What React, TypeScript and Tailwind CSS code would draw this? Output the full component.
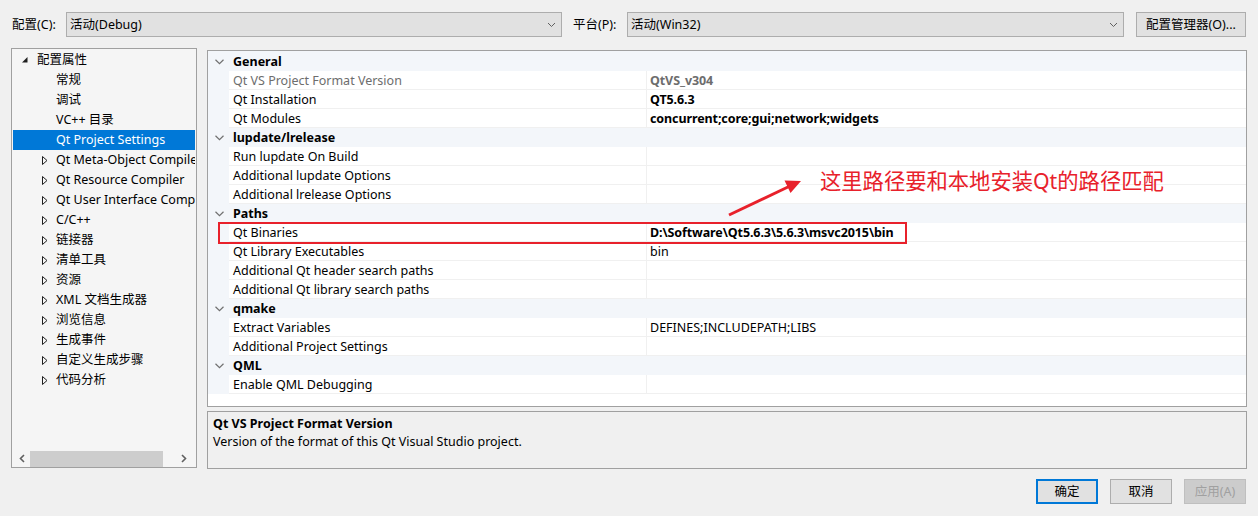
import React from "react"

type Prop = { name: string; value?: string; bold?: boolean; disabled?: boolean }
type Cat = { title: string; props: Prop[] }

const categories: Cat[] = [
  {
    title: "General",
    props: [
      { name: "Qt VS Project Format Version", value: "QtVS_v304", bold: true, disabled: true },
      { name: "Qt Installation", value: "QT5.6.3", bold: true },
      { name: "Qt Modules", value: "concurrent;core;gui;network;widgets", bold: true },
    ],
  },
  {
    title: "lupdate/lrelease",
    props: [
      { name: "Run lupdate On Build" },
      { name: "Additional lupdate Options" },
      { name: "Additional lrelease Options" },
    ],
  },
  {
    title: "Paths",
    props: [
      { name: "Qt Binaries", value: "D:\\Software\\Qt5.6.3\\5.6.3\\msvc2015\\bin", bold: true },
      { name: "Qt Library Executables", value: "bin" },
      { name: "Additional Qt header search paths" },
      { name: "Additional Qt library search paths" },
    ],
  },
  {
    title: "qmake",
    props: [
      { name: "Extract Variables", value: "DEFINES;INCLUDEPATH;LIBS" },
      { name: "Additional Project Settings" },
    ],
  },
  {
    title: "QML",
    props: [{ name: "Enable QML Debugging" }],
  },
]

const treeChildren: { label: string; expandable: boolean; selected?: boolean }[] = [
  { label: "常规", expandable: false },
  { label: "调试", expandable: false },
  { label: "VC++ 目录", expandable: false },
  { label: "Qt Project Settings", expandable: false, selected: true },
  { label: "Qt Meta-Object Compiler", expandable: true },
  { label: "Qt Resource Compiler", expandable: true },
  { label: "Qt User Interface Compiler", expandable: true },
  { label: "C/C++", expandable: true },
  { label: "链接器", expandable: true },
  { label: "清单工具", expandable: true },
  { label: "资源", expandable: true },
  { label: "XML 文档生成器", expandable: true },
  { label: "浏览信息", expandable: true },
  { label: "生成事件", expandable: true },
  { label: "自定义生成步骤", expandable: true },
  { label: "代码分析", expandable: true },
]

function ComboChevron() {
  return (
    <svg width="9" height="6" viewBox="0 0 9 6">
      <polyline points="1,1 4.5,4.5 8,1" fill="none" stroke="#606060" strokeWidth="1" />
    </svg>
  )
}

function Combo({ text, width }: { text: string; width: string }) {
  return (
    <div
      className={`${width} h-[25px] border border-[#adadad] bg-[#e1e1e1] flex items-center justify-between pl-[3px] pr-[5px]`}
    >
      <span>{text}</span>
      <ComboChevron />
    </div>
  )
}

function CollapsedIcon() {
  return (
    <svg width="6" height="9" viewBox="0 0 6 9">
      <path d="M0.5 0.5 L5 4.5 L0.5 8.5 Z" fill="none" stroke="#1e1e1e" strokeWidth="1" />
    </svg>
  )
}

function ExpandedIcon() {
  return (
    <svg width="6" height="6" viewBox="0 0 6 6">
      <path d="M5.5 0 L5.5 5.5 L0 5.5 Z" fill="#1e1e1e" />
    </svg>
  )
}

function CatChevron() {
  return (
    <svg width="9" height="6" viewBox="0 0 9 6">
      <polyline points="0.5,0.8 4.5,4.6 8.5,0.8" fill="none" stroke="#707070" strokeWidth="1.2" />
    </svg>
  )
}

function TreePanel() {
  return (
    <div className="w-[186px] h-[420px] border border-[#a0a0a0] bg-[#f5f5f5] flex flex-col">
      <div className="flex-1 overflow-hidden pt-px">
        <div className="h-[20px] flex items-center whitespace-nowrap">
          <span className="ml-[10px] w-[15px] shrink-0 flex items-center">
            <ExpandedIcon />
          </span>
          <span>配置属性</span>
        </div>
        {treeChildren.map((c) => (
          <div
            key={c.label}
            className={`h-[20px] flex items-center whitespace-nowrap overflow-hidden mx-px ${
              c.selected ? "bg-[#0078d7] text-white" : ""
            }`}
          >
            <span className="ml-[29px] w-[14px] shrink-0 flex items-center">
              {c.expandable && <CollapsedIcon />}
            </span>
            <span className="shrink-0">{c.label}</span>
          </div>
        ))}
      </div>
      <div className="h-[17px] flex items-center">
        <span className="w-[18px] flex justify-center pl-[2px]">
          <svg width="6" height="9" viewBox="0 0 6 9">
            <polyline points="5,1 1.5,4.5 5,8" fill="none" stroke="#606060" strokeWidth="1.6" />
          </svg>
        </span>
        <div className="w-[133px] h-[16px] bg-[#cdcdcd]" />
        <span className="flex-1 flex justify-center pl-[8px]">
          <svg width="6" height="9" viewBox="0 0 6 9">
            <polyline points="1,1 4.5,4.5 1,8" fill="none" stroke="#606060" strokeWidth="1.6" />
          </svg>
        </span>
      </div>
    </div>
  )
}

function PropertyGrid() {
  return (
    <div className="mt-[2px] h-[357px] border border-[#a0a0a0] bg-white overflow-hidden">
      <div className="h-px bg-[#f3f6fa]" />
      {categories.map((cat) => (
        <div key={cat.title}>
          <div className="h-[19px] flex items-center bg-[#f3f6fa]">
            <span className="w-[21px] flex justify-center pl-[1px]">
              <CatChevron />
            </span>
            <span className="pl-[4px] font-bold">{cat.title}</span>
          </div>
          {cat.props.map((p) => (
            <div key={p.name} className="h-[19px] flex">
              <div className="w-[21px] bg-[#f3f6fa]" />
              <div
                className={`w-[417px] flex items-center pl-[4px] pt-[2px] border-b border-[#f0f0f0] whitespace-nowrap ${
                  p.disabled ? "text-[#6d6d6d]" : "text-black"
                }`}
              >
                {p.name}
              </div>
              <div
                className={`flex-1 flex items-center pl-[3px] pt-[2px] border-b border-l border-[#f0f0f0] whitespace-nowrap ${
                  p.bold ? "font-bold tracking-[-0.1px]" : ""
                } ${p.disabled ? "text-[#6d6d6d]" : "text-black"}`}
              >
                {p.value}
              </div>
            </div>
          ))}
        </div>
      ))}
    </div>
  )
}

function DialogButton({ label, variant }: { label: string; variant: "default" | "normal" | "disabled" }) {
  const styles = {
    default: "border-2 border-[#0078d7] bg-[#e1e1e1] text-black",
    normal: "border border-[#adadad] bg-[#e1e1e1] text-black",
    disabled: "border border-[#bfbfbf] bg-[#cccccc] text-[#a0a0a0]",
  }
  return (
    <div className={`w-[62px] h-[25px] flex items-center justify-center ${styles[variant]}`}>{label}</div>
  )
}

export default function App() {
  return (
    <div className="relative w-[1258px] h-[516px] overflow-hidden bg-[#f0f0f0] text-[12.5px] leading-[16px] text-black font-['Noto_Sans','Noto_Sans_CJK_SC',sans-serif]">
      {/* Config / platform bar */}
      <div className="flex items-center pt-[12px] pl-[12px]">
        <span className="w-[54px]">配置(C):</span>
        <Combo text="活动(Debug)" width="w-[496px]" />
        <span className="ml-[11px] w-[54px]">平台(P):</span>
        <Combo text="活动(Win32)" width="w-[497px]" />
        <div className="ml-[12px] w-[110px] h-[25px] border border-[#adadad] bg-[#e1e1e1] flex items-center justify-center">
          配置管理器(O)...
        </div>
      </div>

      {/* Tree + property grid */}
      <div className="flex mt-[11px] pl-[11px]">
        <TreePanel />
        <div className="ml-[10px] w-[1040px] flex flex-col">
          <PropertyGrid />
          <div className="mt-[4px] h-[58px] border border-[#a0a0a0] bg-[#f0f0f0] pl-[5px] pt-[3px]">
            <div className="font-bold leading-[18px]">Qt VS Project Format Version</div>
            <div className="leading-[18px]">Version of the format of this Qt Visual Studio project.</div>
          </div>
        </div>
      </div>

      {/* Dialog buttons */}
      <div className="flex justify-end gap-[12px] pr-[12px] mt-[10px]">
        <DialogButton label="确定" variant="default" />
        <DialogButton label="取消" variant="normal" />
        <DialogButton label="应用(A)" variant="disabled" />
      </div>

      {/* Annotation overlay */}
      <div className="absolute left-[218px] top-[222px] w-[689px] h-[22px] border-2 border-[#e8212b] pointer-events-none" />
      <svg className="absolute left-0 top-0 pointer-events-none" width="1258" height="516" viewBox="0 0 1258 516">
        <line x1="729" y1="215" x2="789" y2="186.5" stroke="#e8212b" strokeWidth="3" />
        <polygon points="801,181 790.5,193 784.5,180.5" fill="#e8212b" />
      </svg>
      <div className="absolute left-[820px] top-[168px] text-[21.3px] leading-[26px] text-[#e8212b] whitespace-nowrap">
        这里路径要和本地安装Qt的路径匹配
      </div>
    </div>
  )
}
